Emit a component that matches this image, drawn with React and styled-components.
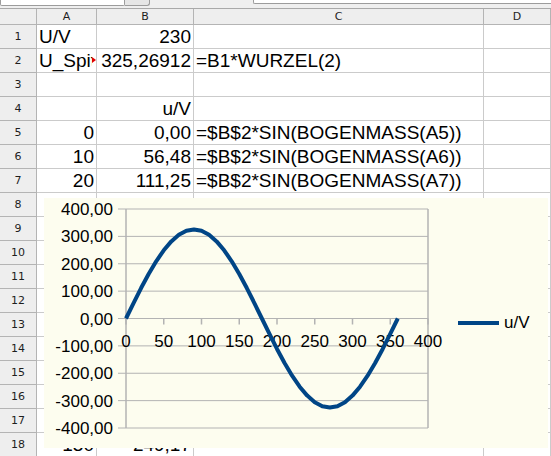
import styled, { createGlobalStyle } from "styled-components";

const GlobalStyle = createGlobalStyle`
   html, body {
      margin: 0;
      padding: 0;
      background: #ffffff;
   }
   body {
      font-family: 'Liberation Sans', Arial, sans-serif;
   }
`

const Page = styled.div`
   position: relative;
   width: 551px;
   height: 456px;
   overflow: hidden;
   background: #ffffff;
`

const TopBar = styled.div`
   display: flex;
   align-items: flex-start;
   height: 9px;
   box-sizing: border-box;
   border-bottom: 1px solid #a9a9a9;
   background: #efefef;
   overflow: hidden;
`
const NameBox = styled.div`
   width: 125px;
   height: 6px;
   box-sizing: border-box;
   background: #ffffff;
   border: 1px solid #9c9c9c;
   border-top: none;
   border-radius: 0 0 2px 2px;
`
const DropButton = styled.div`
   width: 25px;
   height: 6px;
   box-sizing: border-box;
   background: #e6e6e6;
   border: 1px solid #9c9c9c;
   border-left: none;
   border-top: none;
   border-radius: 0 0 3px 0;
`
const FormulaBox = styled.div`
   flex: 1;
   margin-left: 103px;
   height: 4px;
   box-sizing: border-box;
   background: #ffffff;
   border: 1px solid #9c9c9c;
   border-top: none;
   border-right: none;
   border-radius: 0 0 0 2px;
`

const Sheet = styled.div`
   display: grid;
   grid-template-columns: 37px 60px 97px 290px 1fr;
   grid-template-rows: 16px repeat(18, 24px);
`

const HeadCell = styled.div`
   display: flex;
   align-items: center;
   justify-content: center;
   box-sizing: border-box;
   background: #eeeeee;
   border-right: 1px solid #b4b4b4;
   border-bottom: 1px solid #b4b4b4;
   font-family: 'DejaVu Sans', sans-serif;
   font-size: 11px;
   color: #1e1e1e;
`

const Cell = styled.div`
   position: relative;
   box-sizing: border-box;
   border-right: 1px solid #cbcbcb;
   border-bottom: 1px solid #cbcbcb;
   padding: 1px 2px 0 2px;
   font-size: 19px;
   line-height: 22px;
   color: #000000;
   text-align: ${(p) => (p.$right ? "right" : "left")};
   white-space: nowrap;
   overflow: hidden;
`
const ClipText = styled.span`
   display: block;
   overflow: hidden;
   margin-right: 2px;
`
const OverflowMark = styled.span`
   position: absolute;
   right: 0;
   top: 8px;
   width: 0;
   height: 0;
   border-top: 3px solid transparent;
   border-bottom: 3px solid transparent;
   border-left: 4px solid #e00000;
`

const Chart = styled.div`
   position: absolute;
   left: 44px;
   top: 198px;
   width: 504px;
   height: 250px;
   display: flex;
   align-items: center;
   background: #fdfdef;
`
const Plot = styled.svg`
   flex: none;
   display: block;
   font-family: 'Liberation Sans', Arial, sans-serif;
   font-size: 17px;
`
const Legend = styled.div`
   display: flex;
   align-items: center;
   gap: 5px;
   font-size: 17px;
   color: #000000;
`
const LegendLine = styled.span`
   display: block;
   width: 41px;
   height: 4px;
   background: #004586;
`

const cols = ["A", "B", "C", "D"];

// rows 8-17 lie under the chart, only row 18 peeks out below it
const rows = [
   ["U/V", "230", ""],
   ["U_Spitze", "325,26912", "=B1*WURZEL(2)"],
   ["", "", ""],
   ["", "u/V", ""],
   ["0", "0,00", "=$B$2*SIN(BOGENMASS(A5))"],
   ["10", "56,48", "=$B$2*SIN(BOGENMASS(A6))"],
   ["20", "111,25", "=$B$2*SIN(BOGENMASS(A7))"],
   ["", "", ""],
   ["", "", ""],
   ["", "", ""],
   ["", "", ""],
   ["", "", ""],
   ["", "", ""],
   ["", "", ""],
   ["", "", ""],
   ["", "", ""],
   ["", "", ""],
   ["130", "249,17", ""],
];

const PLOT_W = 414;
const L = 82, R = 384, T = 11, B = 230;
const yUnit = (B - T) / 800;
const xUnit = (R - L) / 400;
const yOf = (v) => T + (400 - v) * yUnit;
const xOf = (v) => L + v * xUnit;
const GRID = "#b3b3b3";

function SineChart() {
   const yTicks = [400, 300, 200, 100, 0, -100, -200, -300, -400];
   const xTicks = [0, 50, 100, 150, 200, 250, 300, 350, 400];
   const pts = [];
   for (let d = 0; d <= 360; d += 10) {
      const v = 325.26912 * Math.sin((d * Math.PI) / 180);
      pts.push(`${xOf(d).toFixed(2)},${yOf(v).toFixed(2)}`);
   }
   return (
      <Plot width={PLOT_W} height={250} viewBox={`0 0 ${PLOT_W} 250`}>
         {yTicks.map((v) => (
            <g key={v}>
               <line x1={L - 8} x2={R} y1={yOf(v)} y2={yOf(v)} stroke={GRID} strokeWidth="1" />
               <text x={69} y={yOf(v) + 6} textAnchor="end" fill="#000">
                  {v.toFixed(2).replace(".", ",")}
               </text>
            </g>
         ))}
         <line x1={R} x2={R} y1={T} y2={B} stroke={GRID} strokeWidth="1.5" />
         <line x1={L} x2={L} y1={T} y2={B} stroke={GRID} strokeWidth="1.5" />
         {xTicks.map((v) => (
            <g key={v}>
               <line x1={xOf(v)} x2={xOf(v)} y1={yOf(0)} y2={yOf(0) + 6} stroke={GRID} strokeWidth="1.5" />
               <text x={xOf(v)} y={149} textAnchor="middle" fill="#000">
                  {v}
               </text>
            </g>
         ))}
         <polyline
            points={pts.join(" ")}
            fill="none"
            stroke="#004586"
            strokeWidth="4"
            strokeLinejoin="round"
         />
      </Plot>
   );
}

export default function App() {
   return (
      <Page>
         <GlobalStyle />
         <TopBar>
            <NameBox />
            <DropButton />
            <FormulaBox />
         </TopBar>
         <Sheet>
            <HeadCell />
            {cols.map((c) => (
               <HeadCell key={c}>{c}</HeadCell>
            ))}
            {rows.map((r, i) => {
               const clipped = r[0] === "U_Spitze";
               return [
                  <HeadCell key={`h${i}`}>{i + 1}</HeadCell>,
                  <Cell key={`a${i}`} $right={/^\d/.test(r[0])}>
                     {clipped ? <ClipText>{r[0]}</ClipText> : r[0]}
                     {clipped && <OverflowMark />}
                  </Cell>,
                  <Cell key={`b${i}`} $right>{r[1]}</Cell>,
                  <Cell key={`c${i}`}>{r[2]}</Cell>,
                  <Cell key={`d${i}`} />,
               ];
            })}
         </Sheet>
         <Chart>
            <SineChart />
            <Legend>
               <LegendLine />
               u/V
            </Legend>
         </Chart>
      </Page>
   );
}
